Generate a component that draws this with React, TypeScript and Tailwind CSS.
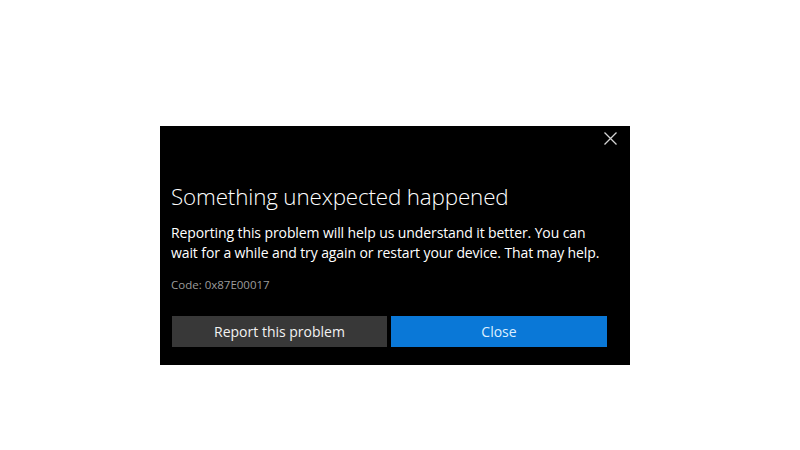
export default function App() {
  return (
    <div className="w-[800px] h-[450px] bg-white pt-[126px] pl-[160px]" style={{ fontFamily: '"Open Sans", "Noto Sans", sans-serif' }}>
      <div className="w-[470px] h-[239px] bg-black flex flex-col">
        {/* top bar with close glyph */}
        <div className="flex justify-end h-[30px] pr-[13px] pt-[6px]">
          <svg width="13" height="13" viewBox="0 0 13 13" className="text-[#d4d4d4]">
            <path d="M0.5 0.5L12.5 12.5M12.5 0.5L0.5 12.5" stroke="currentColor" strokeWidth="1.3" />
          </svg>
        </div>

        <div className="pl-[11px] pr-[23px] flex flex-col">
          <h1 className="text-[22.4px] font-light text-white leading-[30px] mt-[26px] tracking-[-0.15px]">
            Something unexpected happened
          </h1>
          <p className="text-[14px] text-white leading-[20px] mt-[11px] tracking-[-0.1px]">
            Reporting this problem will help us understand it better. You can wait for a while and try again or restart your device. That may help.
          </p>
          <p className="text-[11.5px] text-[#9c9c9c] mt-[14px] leading-[16px]">Code: 0x87E00017</p>

          <div className="flex gap-[4px] mt-[23px] pl-[1px]">
            <button className="w-[215px] h-[31px] bg-[#383838] text-[#f2f2f2] text-[14px]">
              Report this problem
            </button>
            <button className="w-[216px] h-[31px] bg-[#0a78d7] text-[#dcefff] text-[14px]">
              Close
            </button>
          </div>
        </div>
      </div>
    </div>
  )
}
